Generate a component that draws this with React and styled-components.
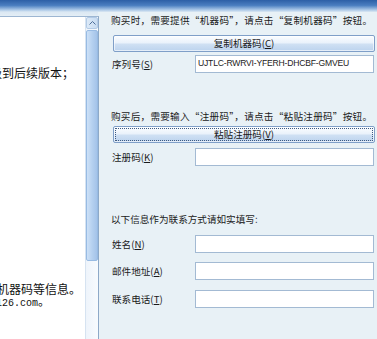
import React from "react";
import styled, { createGlobalStyle } from "styled-components";

const GlobalStyle = createGlobalStyle`
  html, body {
    margin: 0;
    padding: 0;
    width: 377px;
    height: 339px;
    overflow: hidden;
    background: #e8f1f6;
  }
`;

const cjk = `"Noto Sans CJK SC", "Noto Sans", sans-serif`;

const App = () => {
  return (
    <Window>
      <GlobalStyle />
      <TitleBand />
      <Body>
        <LeftColumn>
          <TextBox>
            <Content>
              <Line $top={49.5} $shift={-10}>级到后续版本；</Line>
              <Line $top={204.5} $shift={-3}>机器码等信息。</Line>
              <Line $shift={-10}>
                <Mono>@126.com</Mono>。
              </Line>
            </Content>
            <Scrollbar>
              <ScrollUp>
                <svg width="7" height="4" viewBox="0 0 7 4">
                  <path d="M0.5 3.5 L3.5 0.5 L6.5 3.5" fill="none" stroke="#4d6f99" strokeWidth="1" />
                </svg>
              </ScrollUp>
              <Thumb />
              <Track />
            </Scrollbar>
          </TextBox>
        </LeftColumn>
        <RightPanel>
          <Note $fit>购买时，需要提供“机器码”，请点击“复制机器码”按钮。</Note>
          <Button $top={8}>
            复制机器码(<u>C</u>)
          </Button>
          <Row $top={3}>
            <Label>序列号(<u>S</u>)</Label>
            <Input>UJTLC-RWRVI-YFERH-DHCBF-GMVEU</Input>
          </Row>
          <Note $top={36} $fit>购买后，需要输入“注册码”，请点击“粘贴注册码”按钮。</Note>
          <Button $top={3} $focused>
            <FocusRing>
              粘贴注册码(<u>V</u>)
            </FocusRing>
          </Button>
          <Row $top={5}>
            <Label>注册码(<u>K</u>)</Label>
            <Input />
          </Row>
          <Note $top={46}>以下信息作为联系方式请如实填写:</Note>
          <Row $top={9}>
            <Label>姓名(<u>N</u>)</Label>
            <Input />
          </Row>
          <Row $top={9}>
            <Label>邮件地址(<u>A</u>)</Label>
            <Input />
          </Row>
          <Row $top={10}>
            <Label>联系电话(<u>T</u>)</Label>
            <Input />
          </Row>
        </RightPanel>
      </Body>
    </Window>
  );
};

const Window = styled.div`
  width: 377px;
  height: 339px;
  display: flex;
  flex-direction: column;
  background: #e8f1f6;
  overflow: hidden;
`;

const TitleBand = styled.div`
  height: 12px;
  flex: none;
  background: linear-gradient(#2c5fa6 0%, #4a7ec0 45%, #a5c4e5 80%, #dbe8f3 100%);
`;

const Body = styled.div`
  flex: 1;
  display: flex;
  min-height: 0;
`;

const LeftColumn = styled.div`
  width: 98px;
  flex: none;
  padding-top: 4px;
  display: flex;
  background: linear-gradient(#dbe8f3, #e8f1f6 6px);
`;

const TextBox = styled.div`
  flex: 1;
  display: flex;
  border-top: 1px solid #9db6d2;
  border-right: 1px solid #8ea9c8;
`;

const Content = styled.div`
  width: 85px;
  flex: none;
  background: #ffffff;
  overflow: hidden;
  display: flex;
  flex-direction: column;
  font-family: ${cjk};
  font-size: 12px;
  color: #111;
`;

const Line = styled.div`
  white-space: nowrap;
  line-height: 12px;
  height: 12px;
  margin-top: ${(p) => p.$top || 0}px;
  margin-left: ${(p) => p.$shift || 0}px;
`;

const Mono = styled.span`
  font-family: "Liberation Mono", monospace;
  font-size: 10px;
`;

const Scrollbar = styled.div`
  width: 12px;
  flex: none;
  display: flex;
  flex-direction: column;
  background: linear-gradient(90deg, #eef4fb, #f8fbfe);
  border-left: 1px solid #d6e3f1;
`;

const ScrollUp = styled.div`
  height: 12px;
  flex: none;
  display: flex;
  align-items: center;
  justify-content: center;
  background: linear-gradient(90deg, #dce9f7, #c8dcf2);
  border: 1px solid #b3cbe6;
  border-radius: 2px;
  box-sizing: border-box;
`;

const Thumb = styled.div`
  height: 231px;
  flex: none;
  margin-top: 1px;
  background: linear-gradient(90deg, #cde1f7 0%, #b6d1f0 50%, #a4c3e9 100%);
  border: 1px solid #98bbe3;
  border-radius: 2px;
  box-sizing: border-box;
`;

const Track = styled.div`
  flex: 1;
`;

const RightPanel = styled.div`
  flex: 1;
  display: flex;
  flex-direction: column;
  padding: 1px 2px 0 13px;
  font-family: ${cjk};
  font-size: 9.6px;
  color: #1a1a1a;
`;

const Note = styled.div`
  height: 14px;
  line-height: 14px;
  white-space: nowrap;
  margin-top: ${(p) => p.$top || 0}px;
  width: ${(p) => (p.$fit ? "261px" : "auto")};
  text-align: ${(p) => (p.$fit ? "justify" : "left")};
  text-align-last: ${(p) => (p.$fit ? "justify" : "auto")};
  text-justify: inter-character;
`;

const Button = styled.div`
  height: 17px;
  margin: ${(p) => p.$top || 0}px 0 0 2px;
  box-sizing: border-box;
  border: 1px solid #7f9fc8;
  border-radius: 2px;
  background: linear-gradient(#fbfdff 0%, #eaf2fb 45%, #cfe0f3 55%, #bcd3ee 100%);
  box-shadow: inset 0 0 0 1px rgba(255, 255, 255, 0.6);
  display: flex;
  align-items: stretch;
  justify-content: center;
  line-height: 15px;
  text-align: center;
  padding: ${(p) => (p.$focused ? "1px" : "0")};
`;

const FocusRing = styled.div`
  flex: 1;
  border: 1px dotted #3e5a80;
  line-height: 11px;
  text-align: center;
`;

const Row = styled.div`
  display: grid;
  grid-template-columns: 84px 1fr;
  align-items: center;
  height: 18px;
  margin-top: ${(p) => p.$top || 0}px;
`;

const Label = styled.div`
  padding-left: 1px;
  white-space: nowrap;
`;

const Input = styled.div`
  height: 18px;
  box-sizing: border-box;
  margin-right: 1px;
  background: #ffffff;
  border: 1px solid #a3bad3;
  font-family: "Liberation Sans", Arial, sans-serif;
  font-size: 8.6px;
  letter-spacing: -0.2px;
  line-height: 15px;
  padding-left: 2px;
  color: #222;
  white-space: nowrap;
  overflow: hidden;
`;

export default App;
